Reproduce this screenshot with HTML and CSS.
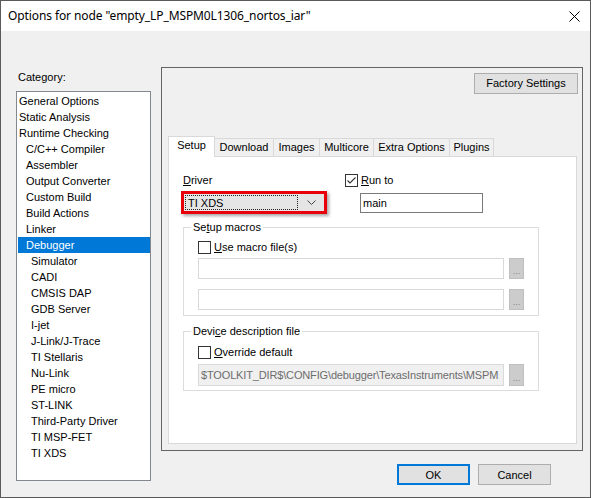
FILE: index.html
```html
<!DOCTYPE html>
<html>
<head>
<meta charset="utf-8">
<link rel="stylesheet" href="styles.css">
</head>
<body>
<div class="window">
  <div class="titlebar">
    <span class="title">Options for node "empty_LP_MSPM0L1306_nortos_iar"</span>
    <svg class="close" width="11" height="11" viewBox="0 0 11 11"><path d="M0.5 0.5 L10.5 10.5 M10.5 0.5 L0.5 10.5" stroke="#000" stroke-width="1" fill="none"/></svg>
  </div>
  <div class="body">
    <div class="left">
      <div class="cat-label">Category:</div>
      <ul class="list">
        <li>General Options</li>
        <li>Static Analysis</li>
        <li>Runtime Checking</li>
        <li class="l1">C/C++ Compiler</li>
        <li class="l1">Assembler</li>
        <li class="l1">Output Converter</li>
        <li class="l1">Custom Build</li>
        <li class="l1">Build Actions</li>
        <li class="l1">Linker</li>
        <li class="l1 sel">Debugger</li>
        <li class="l2">Simulator</li>
        <li class="l2">CADI</li>
        <li class="l2">CMSIS DAP</li>
        <li class="l2">GDB Server</li>
        <li class="l2">I-jet</li>
        <li class="l2">J-Link/J-Trace</li>
        <li class="l2">TI Stellaris</li>
        <li class="l2">Nu-Link</li>
        <li class="l2">PE micro</li>
        <li class="l2">ST-LINK</li>
        <li class="l2">Third-Party Driver</li>
        <li class="l2">TI MSP-FET</li>
        <li class="l2">TI XDS</li>
      </ul>
    </div>
    <div class="right">
      <div class="panel">
        <div class="btn factory">Factory Settings</div>
        <div class="tabs">
          <div class="tab active t-setup">Setup</div>
          <div class="tab t-download">Download</div>
          <div class="tab t-images">Images</div>
          <div class="tab t-multicore">Multicore</div>
          <div class="tab t-extra">Extra Options</div>
          <div class="tab t-plugins">Plugins</div>
        </div>
        <div class="tab-content">
          <div class="top-row">
            <div class="driver">
              <div class="lbl"><u>D</u>river</div>
              <div class="combo">
                <div class="combo-text">TI XDS</div>
                <svg class="chev" width="9" height="5" viewBox="0 0 9 5"><path d="M0.5 0.5 L4.5 4.5 L8.5 0.5" stroke="#444" stroke-width="1" fill="none"/></svg>
              </div>
            </div>
            <div class="runto">
              <div class="check"><span class="cb"><svg width="11" height="11" viewBox="0 0 11 11"><path d="M1.5 5.5 L4 8 L9.5 2.5" stroke="#333" stroke-width="1.1" fill="none"/></svg></span><span><u>R</u>un to</span></div>
              <div class="edit main">main</div>
            </div>
          </div>
          <fieldset class="group macros">
            <legend>Se<u>t</u>up macros</legend>
            <div class="check"><span class="cb"></span><span><u>U</u>se macro file(s)</span></div>
            <div class="file-row first"><div class="edit file"></div><div class="dots"><span>...</span></div></div>
            <div class="file-row second"><div class="edit file"></div><div class="dots"><span>...</span></div></div>
          </fieldset>
          <fieldset class="group device">
            <legend>Devi<u>c</u>e description file</legend>
            <div class="check"><span class="cb"></span><span><u>O</u>verride default</span></div>
            <div class="file-row path-row"><div class="edit file path"><span class="path-text">$TOOLKIT_DIR$\CONFIG\debugger\TexasInstruments\MSPM</span></div><div class="dots tall"><span>...</span></div></div>
          </fieldset>
        </div>
      </div>
      <div class="buttons">
        <div class="btn ok">OK</div>
        <div class="btn cancel">Cancel</div>
      </div>
    </div>
  </div>
</div>
</body>
</html>
```
FILE: styles.css
```css
html, body {
  margin: 0;
  padding: 0;
}
body {
  font-family: "Liberation Sans", Arial, sans-serif;
  font-size: 11px;
  color: #000;
  background: #f0f0f0;
}
.window {
  width: 591px;
  height: 498px;
  box-sizing: border-box;
  border: 1px solid #5a5a5a;
  background: #f0f0f0;
  display: flex;
  flex-direction: column;
  overflow: hidden;
}
.titlebar {
  height: 30px;
  flex: none;
  background: #fff;
  display: flex;
  align-items: center;
  padding-left: 7px;
}
.title {
  flex: 1;
  font-family: "Noto Sans", "Open Sans", sans-serif;
  font-size: 12px;
  letter-spacing: -0.1px;
  padding-bottom: 2px;
}
.close {
  margin-right: 10px;
}
.body {
  flex: 1;
  display: flex;
  gap: 10px;
  padding: 36px 7px 0 15px;
}
.left {
  width: 135px;
  display: flex;
  flex-direction: column;
}
.cat-label {
  margin-top: 4px;
  height: 13px;
  line-height: 13px;
  margin-bottom: 7px;
  padding-left: 2px;
}
.list {
  height: 390px;
  box-sizing: border-box;
  border: 1px solid #828790;
  background: #fff;
  margin: 0;
  padding: 1px 0 0 1px;
  list-style: none;
}
.list li {
  height: 16px;
  line-height: 16px;
  padding-left: 1px;
  white-space: nowrap;
}
.list li.l1 { padding-left: 8px; }
.list li.l2 { padding-left: 13px; }
.list li.sel {
  background: #0078d7;
  color: #fff;
}
.right {
  width: 422px;
  display: flex;
  flex-direction: column;
}
.panel {
  height: 384px;
  box-sizing: border-box;
  border: 1px solid #646464;
  padding: 5px 4px 6px 6px;
  display: flex;
  flex-direction: column;
}
.btn {
  box-sizing: border-box;
  border: 1px solid #adadad;
  background: #e1e1e1;
  display: flex;
  align-items: center;
  justify-content: center;
  height: 21px;
}
.factory {
  align-self: flex-end;
  width: 104px;
  padding-bottom: 1px;
}
.tabs {
  margin-top: 42px;
  height: 20px;
  display: flex;
  align-items: flex-end;
}
.tab {
  height: 18px;
  box-sizing: border-box;
  border: 1px solid #d9d9d9;
  border-bottom: none;
  margin-right: -1px;
  padding: 0;
  text-align: center;
  line-height: 17px;
  background: #f0f0f0;
  white-space: nowrap;
}
.tab.active {
  height: 21px;
  margin-bottom: -1px;
  background: #fff;
  line-height: 17px;
  position: relative;
  z-index: 1;
}
.t-setup { width: 47px; }
.t-download { width: 60px; }
.t-images { width: 47px; }
.t-multicore { width: 55px; }
.t-extra { width: 77px; }
.t-plugins { width: 45px; }
.tab-content {
  flex: 1;
  margin-right: 1px;
  border: 1px solid #d9d9d9;
  background: #fff;
  padding: 17px 0 0 12px;
}
.top-row {
  display: flex;
  gap: 18px;
}
.driver {
  display: flex;
  flex-direction: column;
}
.lbl {
  margin-left: 2px;
  height: 13px;
  line-height: 13px;
}
.combo {
  margin-top: 4px;
  width: 146px;
  height: 23px;
  box-sizing: border-box;
  border: 3px solid #e8000b;
  background: #e5e5e5;
  box-shadow: 2px 2px 3px rgba(0, 0, 0, 0.35);
  display: flex;
  align-items: center;
}
.combo-text {
  margin-left: 1px;
  width: 113px;
  height: 15px;
  line-height: 15px;
  border: 1px dotted #222;
  padding-left: 2px;
  box-sizing: border-box;
}
.chev {
  margin-left: 9px;
}
.runto {
  display: flex;
  flex-direction: column;
}
.check {
  display: flex;
  align-items: center;
  height: 13px;
  line-height: 13px;
}
.cb {
  width: 13px;
  height: 13px;
  box-sizing: border-box;
  border: 1px solid #333;
  background: #fff;
  margin-right: 3px;
  display: flex;
  align-items: center;
  justify-content: center;
}
.edit {
  box-sizing: border-box;
  border: 1px solid #7a7a7a;
  background: #fff;
  white-space: nowrap;
  overflow: hidden;
}
.edit.main {
  margin-top: 6px;
  margin-left: 15px;
  width: 123px;
  height: 20px;
  line-height: 18px;
  padding-left: 2px;
}
.group {
  margin: 0 0 0 2px;
  width: 356px;
  box-sizing: border-box;
  border: 1px solid #dcdcdc;
  padding: 0 14px 5px 14px;
}
.group legend {
  margin-left: -7px;
  padding: 0 2px;
  line-height: 13px;
}
.macros {
  margin-top: 7px;
}
.macros .check {
  margin-top: 7px;
}
.device {
  margin-top: 9px;
  padding-bottom: 4px;
}
.device .check {
  margin-top: 8px;
}
.file-row {
  display: flex;
  gap: 5px;
}
.file-row.first { margin-top: 4px; }
.file-row.second { margin-top: 10px; }
.file-row.path-row { margin-top: 5px; }
.edit.file {
  width: 306px;
  height: 21px;
  border-color: #d9d9d9;
}
.edit.path {
  height: 22px;
  background: #f0f0f0;
  color: #6d6d6d;
  line-height: 20px;
  padding-left: 2px;
}
.path-text {
  letter-spacing: -0.15px;
}
.dots {
  width: 15px;
  height: 21px;
  box-sizing: border-box;
  border: 1px solid #bfbfbf;
  background: #cccccc;
  color: #838383;
  font-size: 9px;
  display: flex;
  align-items: flex-end;
  justify-content: center;
  padding-bottom: 2px;
  line-height: 9px;
  overflow: hidden;
}
.dots.tall {
  height: 22px;
}
.buttons {
  margin-top: 13px;
  padding-right: 32px;
  display: flex;
  justify-content: flex-end;
  gap: 8px;
}
.ok {
  width: 73px;
  border: 2px solid #0078d7;
}
.cancel {
  width: 73px;
}
```
